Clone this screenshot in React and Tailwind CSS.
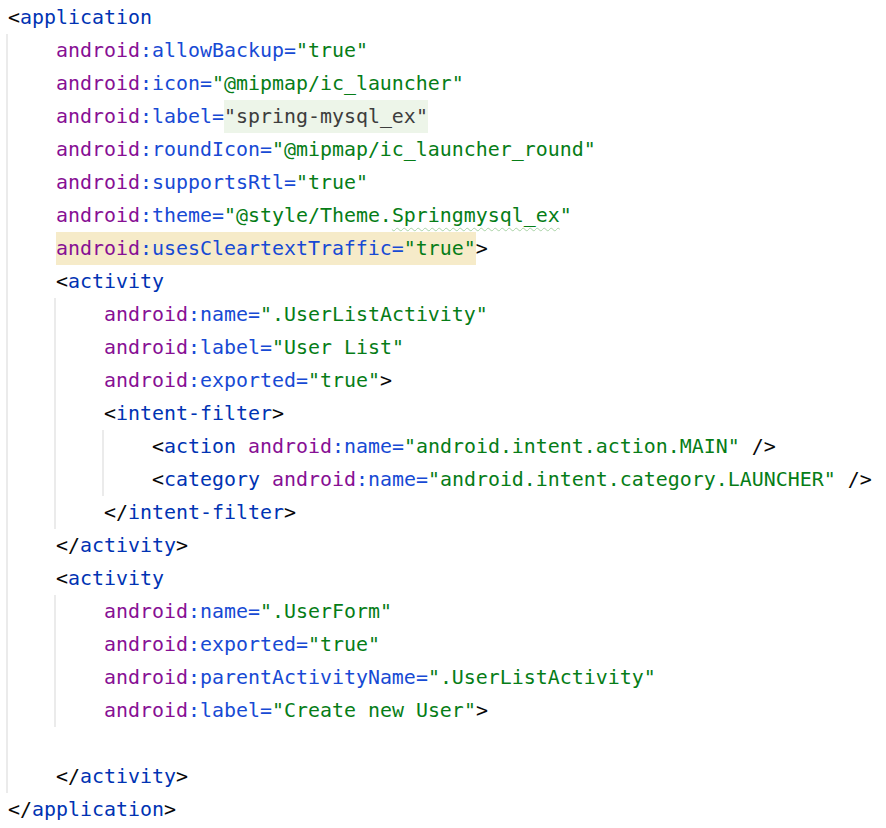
const tagCls = "text-[#0033b3]"
const nsCls = "text-[#871094]"
const attrCls = "text-[#174ad4]"
const valCls = "text-[#067d17]"
const punct = "text-[#080808]"

function Line({ children }) {
  return <div className="h-[33px] leading-[33px] whitespace-pre">{children}</div>
}

function Attr({ name, value, hl, label, theme, tail }) {
  const body = (
    <>
      <span className={nsCls}>android</span>
      <span className={attrCls}>:{name}=</span>
      {label ? (
        <span className="bg-[#edf5e9] inline-block h-[33px] text-[#3d3d3d]">"{value}"</span>
      ) : theme ? (
        <span className={valCls}>
          "@style/Theme.
          <span className="underline decoration-wavy decoration-[#a9d2a6] decoration-1 underline-offset-[5px]">
            Springmysql_ex
          </span>
          "
        </span>
      ) : (
        <span className={valCls}>"{value}"</span>
      )}
    </>
  )
  return (
    <>
      {hl ? <span className="bg-[#f6ebc9] inline-block h-[33px]">{body}</span> : body}
      {tail && <span className={punct}>{tail}</span>}
    </>
  )
}

function Open({ name, tail }) {
  return (
    <>
      <span className={punct}>&lt;</span>
      <span className={tagCls}>{name}</span>
      {tail && <span className={punct}>{tail}</span>}
    </>
  )
}

function Close({ name }) {
  return (
    <>
      <span className={punct}>&lt;/</span>
      <span className={tagCls}>{name}</span>
      <span className={punct}>&gt;</span>
    </>
  )
}

function Guide({ children }) {
  return <div className="ml-[-2px] border-l-2 border-[#ebebeb] pl-[48px]">{children}</div>
}

export default function App() {
  return (
    <div
      className="w-[886px] h-[828px] bg-white pl-[8px] pt-[1px] text-[19.93px] overflow-hidden"
      style={{ fontFamily: '"DejaVu Sans Mono", "Liberation Mono", monospace' }}
    >
      <Line><Open name="application" /></Line>
      <Guide>
        <Line><Attr name="allowBackup" value="true" /></Line>
        <Line><Attr name="icon" value="@mipmap/ic_launcher" /></Line>
        <Line><Attr name="label" value="spring-mysql_ex" label /></Line>
        <Line><Attr name="roundIcon" value="@mipmap/ic_launcher_round" /></Line>
        <Line><Attr name="supportsRtl" value="true" /></Line>
        <Line><Attr name="theme" theme /></Line>
        <Line><Attr name="usesCleartextTraffic" value="true" hl tail=">" /></Line>
        <Line><Open name="activity" /></Line>
        <Guide>
          <Line><Attr name="name" value=".UserListActivity" /></Line>
          <Line><Attr name="label" value="User List" /></Line>
          <Line><Attr name="exported" value="true" tail=">" /></Line>
          <Line><Open name="intent-filter" tail=">" /></Line>
          <Guide>
            <Line>
              <Open name="action" /> <Attr name="name" value="android.intent.action.MAIN" tail=" />" />
            </Line>
            <Line>
              <Open name="category" /> <Attr name="name" value="android.intent.category.LAUNCHER" tail=" />" />
            </Line>
          </Guide>
          <Line><Close name="intent-filter" /></Line>
        </Guide>
        <Line><Close name="activity" /></Line>
        <Line><Open name="activity" /></Line>
        <Guide>
          <Line><Attr name="name" value=".UserForm" /></Line>
          <Line><Attr name="exported" value="true" /></Line>
          <Line><Attr name="parentActivityName" value=".UserListActivity" /></Line>
          <Line><Attr name="label" value="Create new User" tail=">" /></Line>
        </Guide>
        <Line> </Line>
        <Line><Close name="activity" /></Line>
      </Guide>
      <Line><Close name="application" /></Line>
    </div>
  )
}
